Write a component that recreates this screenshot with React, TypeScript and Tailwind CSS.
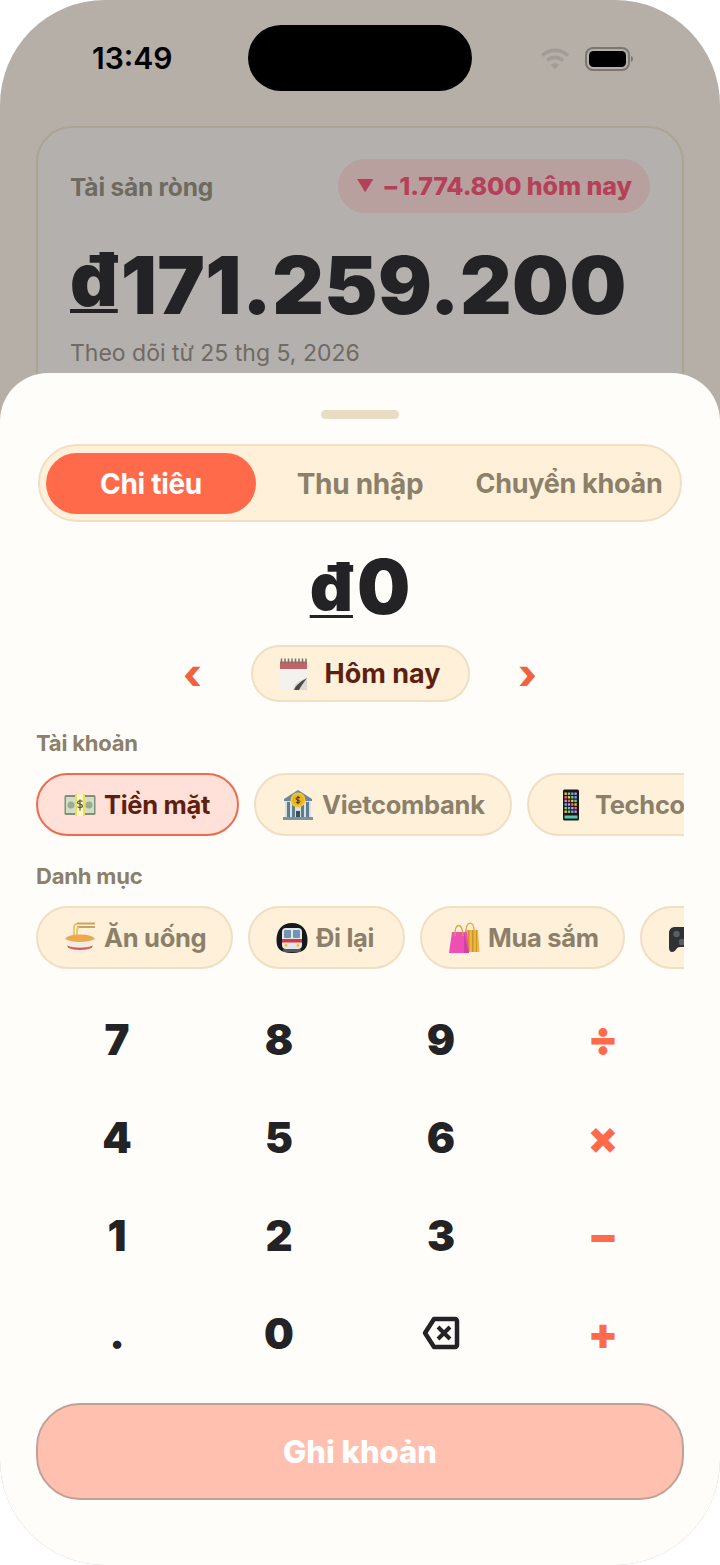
import { ReactNode } from "react";

// emoji-style pictograms, all on a 32px box
const CashIcon = () => (
  <svg width="32" height="32" viewBox="0 0 32 32">
    <rect x="0.500" y="6" width="31" height="20" rx="1.500" fill="#7f8f78" />
    <rect x="2" y="8" width="28" height="16" fill="#d3dcc8" />
    <circle cx="7" cy="16" r="3.500" fill="#9aac8e" />
    <circle cx="25" cy="16" r="3.500" fill="#9aac8e" />
    <rect x="11" y="5" width="10" height="22" fill="#f5d95a" />
    <rect x="13" y="5" width="6" height="22" fill="#fdf5c4" />
    <path d="M18.500 12.500c-1-1.200-5-1-5 .9 0 2.300 5 1.200 5 3.500 0 1.800-4 2-5 .6M16 10.500v11" stroke="#4f5a35" strokeWidth="1.200" fill="none" />
  </svg>
);

const BankIcon = () => (
  <svg width="32" height="32" viewBox="0 0 32 32">
    <path d="M16 1 30 10v2H2v-2z" fill="#6f8794" />
    <rect x="3" y="12" width="26" height="16" fill="#d7e0e4" />
    <path d="M5 13h3v15H5zM10 13h3v15h-3zM19 13h3v15h-3zM24 13h3v15h-3z" fill="#5f7d8d" />
    <rect x="14" y="22" width="4" height="6" fill="#3e4f59" />
    <rect x="1" y="28" width="30" height="3" fill="#7f939e" />
    <circle cx="16" cy="11" r="7.500" fill="#f5c733" />
    <circle cx="16" cy="11" r="5.800" fill="#e9b322" />
    <path d="M18 9c-.8-1-4-.8-4 .8 0 1.800 4 1 4 2.800 0 1.500-3.200 1.600-4 .5M16 7v8" stroke="#3f3312" strokeWidth="1" fill="none" />
  </svg>
);

const PhoneIcon = () => (
  <svg width="32" height="32" viewBox="0 0 32 32">
    <rect x="8" y="0.500" width="16" height="31" rx="1.500" fill="#17181a" />
    {[0, 1, 2, 3, 4, 5].map((row) =>
      [0, 1, 2, 3].map((col) => (
        <rect
          key={`${row}-${col}`}
          x={9.500 + col * 3.300}
          y={3.500 + row * 3.600}
          width="2.400"
          height="2.400"
          fill={["#f4c542", "#5fb6ea", "#ee6a6a", "#7ed07a", "#d58ae8"][(row * 2 + col * 3) % 5]}
        />
      )),
    )}
    <rect x="9.500" y="26.500" width="13" height="3" fill="#58c9b0" />
  </svg>
);

const NoodleIcon = () => (
  <svg width="32" height="32" viewBox="0 0 32 32">
    <path d="M13 1.500h18M13 5h18" stroke="#c8a368" strokeWidth="1.800" />
    <path d="M13 2c-2.500 0-3 1.500-3 4v11M15 5.500c-1.500 0-2 1-2 3v8" stroke="#e8c466" strokeWidth="1.800" fill="none" />
    <ellipse cx="16" cy="17" rx="14.500" ry="4.500" fill="#eba94c" />
    <path d="M1.500 17c0 8 6 14 14.500 14s14.500-6 14.500-14c-6 4-23 4-29 0z" fill="#f2ece6" />
    <path d="M3 23.500c7 3 19 3 26 0l-1.500 2.500c-6 2.500-17 2.500-23 0z" fill="#d9594c" />
  </svg>
);

const TrainIcon = () => (
  <svg width="32" height="32" viewBox="0 0 32 32">
    <path d="M16 1C6 1 0.500 8 0.500 18c0 8 3 13 15.500 13s15.500-5 15.500-13C31.500 8 26 1 16 1z" fill="#17181a" />
    <rect x="6" y="6" width="20" height="21" rx="4" fill="#e4e6e9" />
    <rect x="6" y="17" width="20" height="3.500" fill="#d8363f" />
    <rect x="8" y="8" width="7" height="8" rx="1" fill="#6f95b2" />
    <rect x="17" y="8" width="7" height="8" rx="1" fill="#6f95b2" />
    <circle cx="10" cy="23.500" r="1.400" fill="#f0c040" />
    <circle cx="22" cy="23.500" r="1.400" fill="#f0c040" />
    <rect x="7" y="27" width="18" height="3" rx="1" fill="#55575b" />
  </svg>
);

const BagsIcon = () => (
  <svg width="32" height="32" viewBox="0 0 32 32">
    <path d="M17 8h13l1.500 22H17z" fill="#e9b742" />
    <path d="M20 8h1.500v22H20zM24 8h1.500v22H24zM28 8h1v22h-1z" fill="#cc932a" />
    <path d="M18 11c-1-13 9-13 8-1" stroke="#e1a93a" strokeWidth="1.300" fill="none" />
    <path d="M4 10h15l2 21H1z" fill="#ee4fb4" />
    <path d="M16 10l5 21h-5z" fill="#d63e9f" />
    <path d="M7 14C6 0 15 0 15 14" stroke="#d8a13c" strokeWidth="1.300" fill="none" />
  </svg>
);

const GamepadIcon = () => (
  <svg width="32" height="32" viewBox="0 0 32 32">
    <path d="M7 5c-3 0-6 2-6 6v15c0 2 1 4 3 4 4 0 4-5 8-5h8c4 0 4 5 8 5 2 0 3-2 3-5V11c0-4-3-6-6-6z" fill="#2e3135" />
    <circle cx="8.500" cy="12" r="3.200" fill="#5a5e63" />
    <circle cx="14" cy="20" r="3.200" fill="#5a5e63" />
  </svg>
);

const NotepadIcon = () => (
  <svg width="30" height="32" viewBox="0 0 30 32">
    <rect x="1" y="5" width="27" height="27" fill="#f4f2ef" />
    <rect x="1" y="3.500" width="27" height="7.500" fill="#bf6468" />
    <path d="M2.500 0.500v5M6 0.500v5M9.500 0.500v5M13 0.500v5M16.500 0.500v5M20 0.500v5M23.500 0.500v5M27 0.500v5" stroke="#77726c" strokeWidth="1.500" />
    <path d="M14 32c1-6 6-10 14-12v12z" fill="#dcd8d2" />
    <path d="M15 32c2-5 6-8 13-12-3 4-6 8-8 12z" fill="#4b4947" />
  </svg>
);

const WifiIcon = () => (
  <svg width="30" height="22" viewBox="0 0 30 22" fill="none" stroke="#a19c95" strokeWidth="3.600">
    <path d="M2 7.500c7.500-6.800 18.500-6.800 26 0" />
    <path d="M7 12.500c4.800-4.200 11.200-4.200 16 0" />
    <path d="M15 21.500l-4-5c2.500-1.800 5.500-1.800 8 0z" fill="#a19c95" stroke="none" />
  </svg>
);

const BatteryIcon = () => (
  <svg width="48" height="24" viewBox="0 0 48 24">
    <rect x="1" y="1" width="43" height="22" rx="7" fill="none" stroke="#7a7772" strokeWidth="2" />
    <rect x="4" y="4" width="37" height="16" rx="4.500" fill="#000" />
    <path d="M46 9c1.300.5 2 1.600 2 3s-.7 2.500-2 3z" fill="#7a7772" />
  </svg>
);

const BackspaceIcon = () => (
  <svg width="38" height="34" viewBox="0 0 38 34" fill="none" stroke="#232326" strokeWidth="4.500" strokeLinejoin="round">
    <path d="M12 3h21a2 2 0 0 1 2 2v24a2 2 0 0 1-2 2H12L3 17z" />
    <path d="M16 11l12 12M28 11 16 23" strokeWidth="4" />
  </svg>
);

function Chip({ icon, label, active, width }: { icon: ReactNode; label?: string; active?: boolean; width: string }) {
  return (
    <div
      className={`${width} h-[63px] pt-[1px] shrink-0 rounded-full border-2 flex items-center pl-[26px] gap-[8px] text-[25.500px] tracking-[-0.300px] font-bold ${
        active ? "bg-[#ffe1d9] border-[#ee6b50] text-[#5f1f10]" : "bg-[#fff0da] border-[#efdfc3] text-[#8b8069]"
      }`}
    >
      <span className="shrink-0">{icon}</span>
      {label && <span className="whitespace-nowrap">{label}</span>}
    </div>
  );
}

const keys = ["7", "8", "9", "÷", "4", "5", "6", "×", "1", "2", "3", "−", ".", "0", "back", "+"];

export default function App() {
  return (
    <div className="w-[720px] h-[1565px] bg-white font-['Inter',sans-serif]">
      <div className="relative w-full h-full rounded-[105px] overflow-hidden bg-[#b5afa8]">
        {/* status bar */}
        <div className="h-[126px] relative">
          <span className="absolute left-[92px] top-[38px] text-[30px] leading-[40px] font-semibold text-black">13:49</span>
          <div className="absolute left-[248px] top-[25px] w-[224px] h-[66px] rounded-[33px] bg-black" />
          <div className="absolute left-[540px] top-[47px] flex items-center gap-[15px]">
            <WifiIcon />
            <BatteryIcon />
          </div>
        </div>

        {/* net worth card, mostly covered by the sheet */}
        <div className="mx-9 h-[300px] rounded-[36px] border-2 border-[#aca493] bg-[#b3b0ae] px-[32px] pt-[31px]">
          <div className="flex items-center justify-between">
            <span className="pt-[2px] text-[24.500px] font-bold tracking-[-0.200px] text-[#6f6a60]">Tài sản ròng</span>
            <span className="h-[54px] w-[312px] pt-[2px] rounded-full bg-[#b8a09e] flex items-center justify-center gap-[8px] text-[25px] font-extrabold tracking-[-0.100px] text-[#b5405a] whitespace-nowrap">
              <span className="text-[17px]">▼</span>
              <span>−1.774.800 hôm nay</span>
            </span>
          </div>
          <div className="mt-[18px] text-[80px] leading-[96px] font-black text-[#232326] whitespace-nowrap">
            <span className="mr-[3px] text-[74px] underline decoration-[4px] underline-offset-[3px] [text-decoration-skip-ink:none] align-[8px]">đ</span>
            <span className="tracking-[0.400px]">171.259.200</span>
          </div>
          <div className="mt-[4px] text-[23px] leading-[32px] text-[#6f6a62]">Theo dõi từ 25 thg 5, 2026</div>
        </div>

        {/* add-transaction sheet */}
        <div className="absolute left-0 right-0 top-[373px] bottom-0 rounded-t-[48px] bg-[#fffdf9] px-9 flex flex-col">
          <div className="mx-auto mt-[37px] w-[78px] h-[9px] rounded-full bg-[#e9dcc4]" />

          <div className="mt-[25px] mx-[2px] h-[78px] rounded-full border-2 border-[#efdfc3] bg-[#fff0da] flex items-center px-[6px] text-[28px] font-bold tracking-[-0.300px] text-[#8b8069]">
            <div className="w-[210px] h-[61px] pt-[2px] rounded-full bg-[#ff6b4a] text-white flex items-center justify-center">Chi tiêu</div>
            <div className="w-[208px] pt-[2px] text-center">Thu nhập</div>
            <div className="w-[208px] pl-[2px] pt-[2px] text-center text-[27px] whitespace-nowrap">Chuyển khoản</div>
          </div>

          <div className="mt-[22px] h-[84px] flex items-center justify-center text-[75px] leading-none font-black text-[#232326]">
            <span className="mr-[4px] text-[67px] underline decoration-[3px] underline-offset-[4px] [text-decoration-skip-ink:none] align-[7px]">đ</span>
            <span>0</span>
          </div>

          <div className="mt-[17px] flex items-center justify-center">
            <span className="w-[66px] text-center text-[#f0623f] text-[42px] leading-none font-extrabold">‹</span>
            <div className="mx-[25px] w-[219px] h-[57px] pt-[1px] rounded-full border-2 border-[#efdfc3] bg-[#fff0da] flex items-center justify-center gap-[15px] text-[27px] font-bold text-[#5f1f10]">
              <NotepadIcon />
              Hôm nay
            </div>
            <span className="w-[66px] text-center text-[#f0623f] text-[42px] leading-none font-extrabold">›</span>
          </div>

          <div className="mt-[26px] text-[22px] leading-[30px] font-bold tracking-[-0.200px] text-[#8b8069]">Tài khoản</div>
          <div className="mt-[15px] flex gap-[15px] overflow-hidden">
            <Chip icon={<CashIcon />} label="Tiền mặt" active width="w-[203px]" />
            <Chip icon={<BankIcon />} label="Vietcombank" width="w-[258px]" />
            <Chip icon={<PhoneIcon />} label="Techcombank" width="w-[270px]" />
          </div>

          <div className="mt-[25px] text-[22px] leading-[30px] font-bold tracking-[-0.200px] text-[#8b8069]">Danh mục</div>
          <div className="mt-[15px] flex gap-[15px] overflow-hidden">
            <Chip icon={<NoodleIcon />} label="Ăn uống" width="w-[197px]" />
            <Chip icon={<TrainIcon />} label="Đi lại" width="w-[157px]" />
            <Chip icon={<BagsIcon />} label="Mua sắm" width="w-[205px]" />
            <Chip icon={<GamepadIcon />} width="w-[180px]" />
          </div>

          {/* keypad */}
          <div className="mt-[21px] grid grid-cols-4 auto-rows-[98px]">
            {keys.map((key, i) => (
              <div
                key={key}
                className={`flex items-center justify-center font-black ${
                  i % 4 === 3 ? "text-[44px] text-[#ff6b4a]" : "text-[42px] text-[#232326]"
                }`}
              >
                {key === "back" ? <BackspaceIcon /> : key}
              </div>
            ))}
          </div>

          <div className="mt-[21px] h-[97px] pt-[2px] rounded-[44px] border-2 border-[#bfa296] bg-[#ffc0b0] flex items-center justify-center text-[31px] font-extrabold text-white">Ghi khoản</div>
        </div>
      </div>
    </div>
  );
}
